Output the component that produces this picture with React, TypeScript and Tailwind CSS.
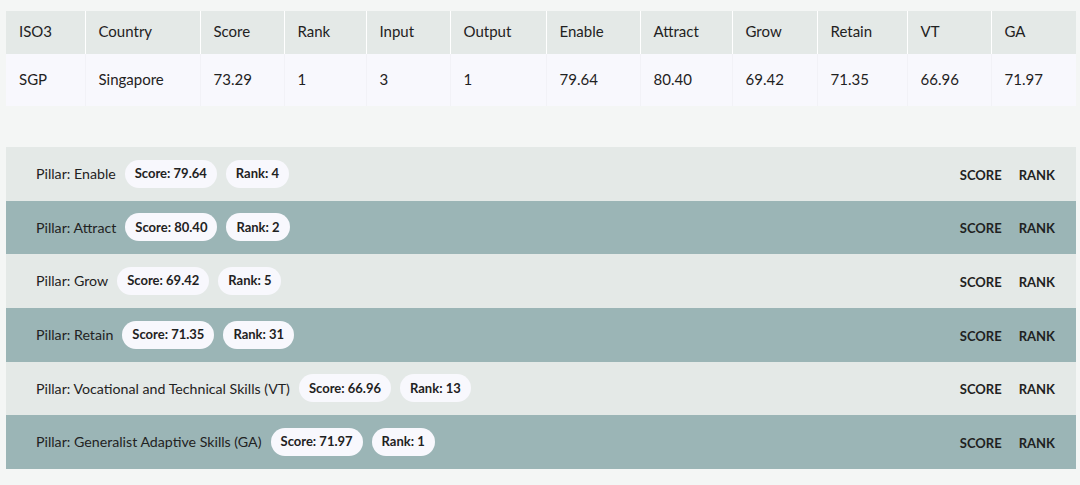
import React from 'react';

const columns = ['ISO3', 'Country', 'Score', 'Rank', 'Input', 'Output', 'Enable', 'Attract', 'Grow', 'Retain', 'VT', 'GA'];
const widths = ['w-[79px]', 'w-[115px]', 'w-[84px]', 'w-[82px]', 'w-[84px]', 'w-[96px]', 'w-[94px]', 'w-[92px]', 'w-[85px]', 'w-[90px]', 'w-[84px]', 'w-[85px]'];
const row = ['SGP', 'Singapore', '73.29', '1', '3', '1', '79.64', '80.40', '69.42', '71.35', '66.96', '71.97'];

const pillars = [
  { name: 'Enable', score: '79.64', rank: '4' },
  { name: 'Attract', score: '80.40', rank: '2' },
  { name: 'Grow', score: '69.42', rank: '5' },
  { name: 'Retain', score: '71.35', rank: '31' },
  { name: 'Vocational and Technical Skills (VT)', score: '66.96', rank: '13' },
  { name: 'Generalist Adaptive Skills (GA)', score: '71.97', rank: '1' },
];

const App = () => {
  return (
    <div className="min-h-[485px] bg-[#f4f6f5] pt-[11px] px-[6px] pb-4 text-[#1f2222] font-['Lato',sans-serif]">
      <table className="table-fixed border-collapse w-[1070px]">
        <thead>
          <tr className="bg-[#e4e9e7] h-[43px]">
            {columns.map((col, i) => (
              <th
                key={col}
                className={`${widths[i]} text-left font-normal text-[15px] pl-[13px] pb-[2px] border-l border-white first:border-l-0`}
              >
                {col}
              </th>
            ))}
          </tr>
        </thead>
        <tbody>
          <tr className="bg-[#f8f8fd] h-[52px]">
            {row.map((val, i) => (
              <td key={i} className="text-[15px] pl-[13px] pb-[2px] border-l border-[#f2f2f7] first:border-l-0">
                {val}
              </td>
            ))}
          </tr>
        </tbody>
      </table>

      <div className="mt-[41px] w-[1070px]">
        {pillars.map((p, i) => (
          <div
            key={p.name}
            className={`h-[53.67px] flex items-center pl-[30px] pr-[21px] ${i % 2 === 0 ? 'bg-[#e4e9e7]' : 'bg-[#9bb5b6]'}`}
          >
            <span className="text-[14.2px]">Pillar: {p.name}</span>
            <span className="ml-[9px] rounded-full bg-[#f8f8fd] h-[28px] px-[10px] flex items-center text-[13px] font-bold">
              Score: {p.score}
            </span>
            <span className="ml-[9px] rounded-full bg-[#f8f8fd] h-[28px] px-[10px] flex items-center text-[13px] font-bold">
              Rank: {p.rank}
            </span>
            <div className="ml-auto pt-[3px] flex gap-[17px] text-[13px] font-bold uppercase">
              <span>Score</span>
              <span>Rank</span>
            </div>
          </div>
        ))}
      </div>
    </div>
  );
};

export default App;
